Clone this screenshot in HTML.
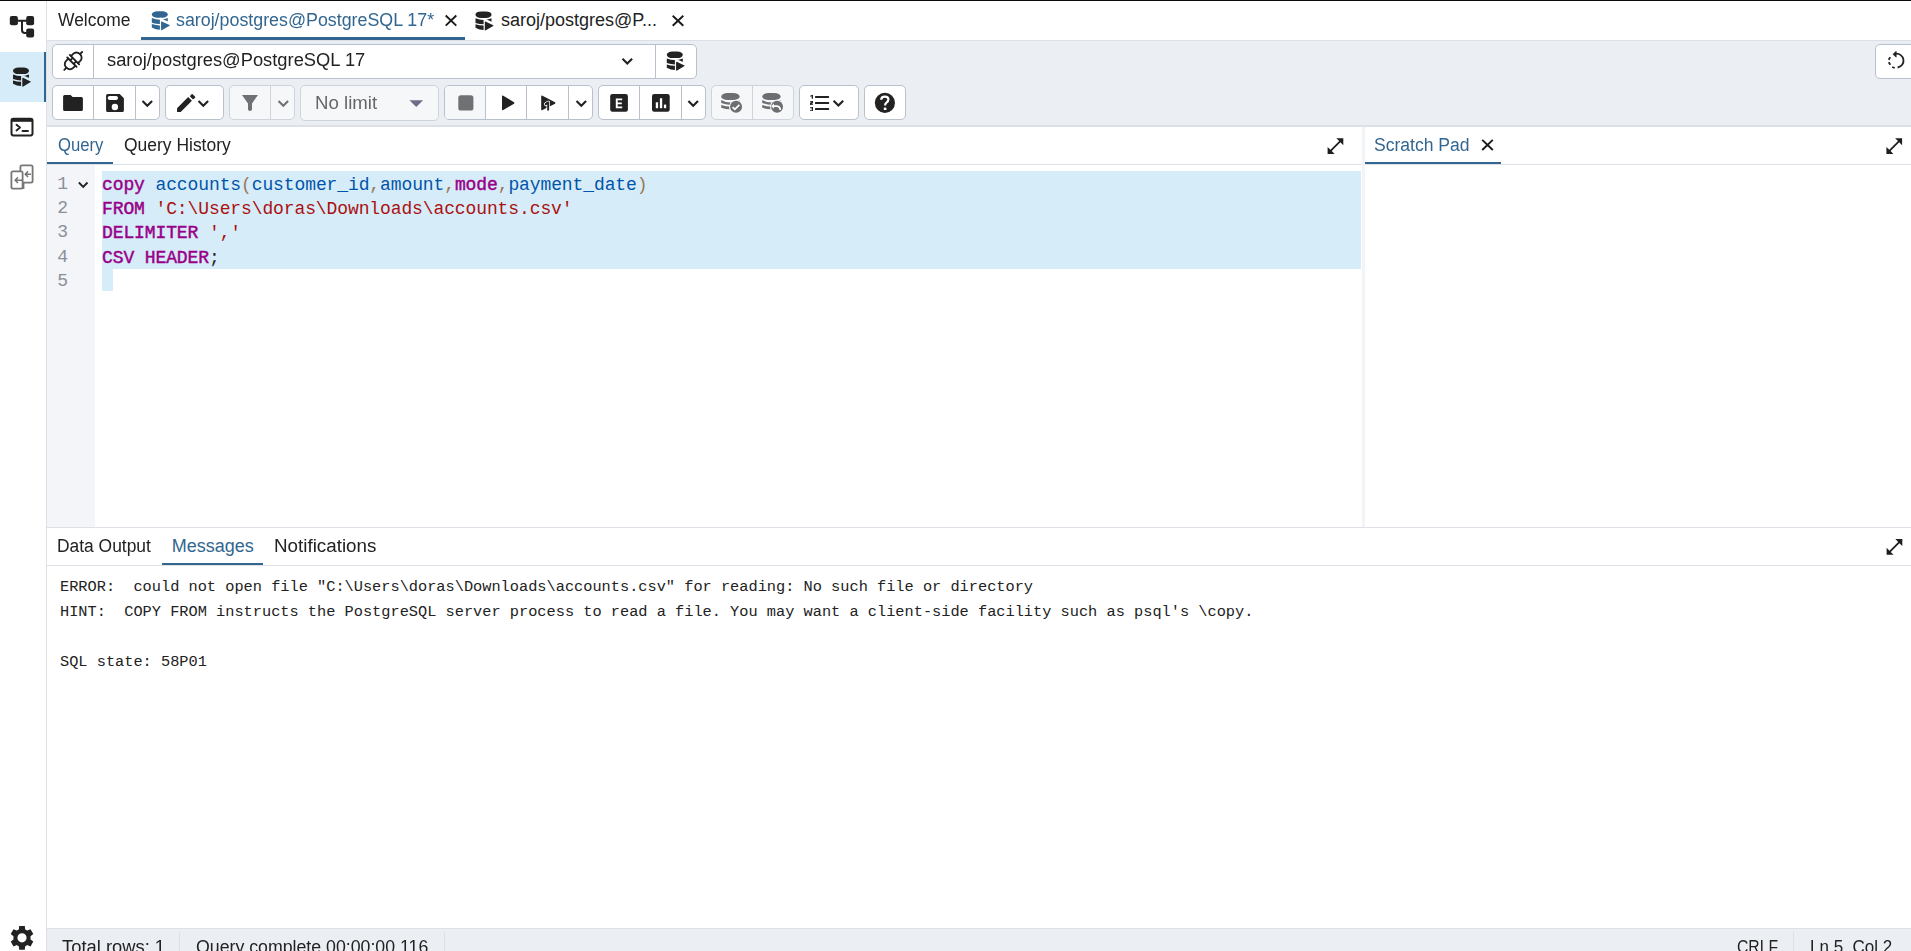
<!DOCTYPE html>
<html><head><meta charset="utf-8">
<style>
*{box-sizing:border-box;margin:0;padding:0}
html,body{width:1911px;height:951px;overflow:hidden;background:#fff}
body{position:relative;font-family:"Liberation Sans",sans-serif;color:#222;font-size:18px}
.a{position:absolute}
.t{position:absolute;white-space:pre;line-height:18px;font-size:18px;transform-origin:0 0}
.m{position:absolute;white-space:pre;font-family:"Liberation Mono",monospace;transform-origin:0 0}
.bd{background:#dde0e6}
.btn{position:absolute;background:#fff;border:1px solid #b9c1cd;border-radius:5px}
.dis{background:#f6f7f9;border-color:#cfd4dc}
.dv{position:absolute;top:0;bottom:0;width:1px;background:#b9c1cd}
.blue{color:#326690}
.kw{color:#990088;font-weight:normal;-webkit-text-stroke:0.45px #990088}
svg{position:absolute;left:0;top:0}
</style></head><body>
<!-- top window line -->
<div class="a" style="left:0;top:0;width:1911px;height:1px;background:#0a0a0a"></div>

<!-- sidebar -->
<div class="a bd" style="left:46px;top:1px;width:1px;height:950px"></div>
<div class="a" style="left:0;top:52px;width:44px;height:50px;background:#d7ecf9"></div>
<div class="a" style="left:44px;top:52px;width:2px;height:50px;background:#326690"></div>

<!-- tab bar -->
<div class="a bd" style="left:47px;top:40px;width:1864px;height:1px"></div>
<div class="t" style="left:57.5px;top:10.5px;transform:scaleX(0.969)">Welcome</div>
<div class="t blue" style="left:175.8px;top:10.5px;transform:scaleX(0.99)">saroj/postgres@PostgreSQL 17*</div>
<div class="a" style="left:141px;top:37px;width:324px;height:3px;background:#326690"></div>
<div class="t" style="left:501px;top:10.5px">saroj/postgres@P...</div>

<!-- toolbar -->
<div class="a" style="left:47px;top:41px;width:1864px;height:84px;background:#ebeef3"></div>
<div class="a bd" style="left:47px;top:125px;width:1864px;height:2px"></div>

<!-- row1 -->
<div class="btn" style="left:52px;top:44px;width:645px;height:35px">
  <div class="dv" style="left:40px"></div>
  <div class="dv" style="left:602px"></div>
</div>
<div class="t" style="left:107.1px;top:51px;transform:scaleX(1.018)">saroj/postgres@PostgreSQL 17</div>
<div class="btn" style="left:1875px;top:44px;width:60px;height:35px"></div>

<!-- row2 -->
<div class="btn" style="left:52px;top:85px;width:108px;height:35px">
  <div class="dv" style="left:40px"></div>
  <div class="dv" style="left:82px"></div>
</div>
<div class="btn" style="left:165px;top:85px;width:59px;height:35px"></div>
<div class="btn dis" style="left:229px;top:85px;width:66px;height:35px">
  <div class="dv" style="left:40px;background:#cfd4dc"></div>
</div>
<div class="btn dis" style="left:300px;top:85px;width:139px;height:36px"></div>
<div class="t" style="left:314.8px;top:93.5px;color:#666;transform:scaleX(1.035)">No limit</div>
<div class="btn" style="left:444px;top:85px;width:149px;height:35px;overflow:hidden">
  <div class="a" style="left:0;top:0;width:41px;height:35px;background:#f6f7f9"></div>
  <div class="dv" style="left:40px"></div>
  <div class="dv" style="left:81px"></div>
  <div class="dv" style="left:123px"></div>
</div>
<div class="btn" style="left:598px;top:85px;width:108px;height:35px">
  <div class="dv" style="left:40px"></div>
  <div class="dv" style="left:82px"></div>
</div>
<div class="btn dis" style="left:711px;top:85px;width:83px;height:35px">
  <div class="dv" style="left:40px;background:#cfd4dc"></div>
</div>
<div class="btn" style="left:799px;top:85px;width:60px;height:35px"></div>
<div class="btn" style="left:864px;top:85px;width:42px;height:35px"></div>

<!-- query tabs -->
<div class="a bd" style="left:47px;top:164px;width:1315px;height:1px"></div>
<div class="t blue" style="left:57.7px;top:135.5px;transform:scaleX(0.927)">Query</div>
<div class="t" style="left:123.7px;top:135.5px;transform:scaleX(0.97)">Query History</div>
<div class="a" style="left:47px;top:162px;width:66px;height:2px;background:#326690"></div>

<!-- splitter -->
<div class="a" style="left:1362px;top:127px;width:3px;height:400px;background:#f3f4f7"></div>

<!-- scratch pad -->
<div class="a bd" style="left:1365px;top:164px;width:546px;height:1px"></div>
<div class="t blue" style="left:1374.4px;top:135.5px;transform:scaleX(0.975)">Scratch Pad</div>
<div class="a" style="left:1365px;top:162px;width:136px;height:2px;background:#326690"></div>

<!-- editor -->
<div class="a" style="left:47px;top:165px;width:48px;height:362px;background:#f3f5f9"></div>
<div class="a" style="left:102px;top:171px;width:1259px;height:98px;background:#d7ecf9"></div>
<div class="a" style="left:102px;top:269px;width:11px;height:22px;background:#d7ecf9"></div>


<!-- code -->
<div class="m" style="left:102px;top:172.5px;font-size:18px;line-height:24.35px;letter-spacing:-0.11px;color:#222"><div><b class="kw">copy</b> <span style="color:#0055aa">accounts</span><span style="color:#997755">(</span><span style="color:#0055aa">customer_id</span><span style="color:#997755">,</span><span style="color:#0055aa">amount</span><span style="color:#997755">,</span><b class="kw">mode</b><span style="color:#997755">,</span><span style="color:#0055aa">payment_date</span><span style="color:#997755">)</span></div><div><b class="kw">FROM</b> <span style="color:#aa1111">'C:\Users\doras\Downloads\accounts.csv'</span></div><div><b class="kw">DELIMITER</b> <span style="color:#aa1111">','</span></div><div><b class="kw">CSV</b> <b class="kw">HEADER</b><span style="color:#222">;</span></div></div>
<div class="m" style="left:53px;top:171.5px;font-size:18px;line-height:24.35px;color:#8a8f98;width:15px;text-align:right">1
2
3
4
5</div>

<!-- messages -->
<div class="m" style="left:60px;top:575px;font-size:15.3px;line-height:25px;color:#222">ERROR:  could not open file "C:\Users\doras\Downloads\accounts.csv" for reading: No such file or directory
HINT:  COPY FROM instructs the PostgreSQL server process to read a file. You may want a client-side facility such as psql's \copy.

SQL state: 58P01</div>
<div class="a bd" style="left:47px;top:527px;width:1864px;height:1px"></div>

<!-- output tabs -->
<div class="t" style="left:57.2px;top:536.5px;transform:scaleX(0.967)">Data Output</div>
<div class="t blue" style="left:171.8px;top:536.5px">Messages</div>
<div class="t" style="left:273.6px;top:536.5px;transform:scaleX(1.044)">Notifications</div>
<div class="a" style="left:162px;top:563px;width:101px;height:2px;background:#326690"></div>
<div class="a bd" style="left:47px;top:565px;width:1864px;height:1px"></div>

<!-- status bar -->
<div class="a" style="left:47px;top:928px;width:1864px;height:23px;background:#ebeef3;border-top:1px solid #dde0e6"></div>
<div class="t" style="left:62px;top:937.5px;transform:scaleX(1.02)">Total rows: 1</div>
<div class="a bd" style="left:179px;top:932px;width:1px;height:19px"></div>
<div class="t" style="left:195.5px;top:937.5px;transform:scaleX(0.985)">Query complete 00:00:00.116</div>
<div class="a bd" style="left:444px;top:932px;width:1px;height:19px"></div>
<div class="t" style="left:1737px;top:938px;transform:scaleX(0.875)">CRLF</div>
<div class="a bd" style="left:1793px;top:932px;width:1px;height:19px"></div>
<div class="t" style="left:1809.5px;top:938px;transform:scaleX(0.945)">Ln 5, Col 2</div>

<!-- ICONS -->
<svg width="1911" height="951" viewBox="0 0 1911 951" style="position:absolute;left:0;top:0;pointer-events:none">
<defs>
  <mask id="dbm" maskUnits="userSpaceOnUse" x="-5" y="-5" width="30" height="30">
    <rect x="-5" y="-5" width="30" height="30" fill="#fff"/>
    <polygon points="8.1,6.8 9.4,6.8 9.4,7.5 18.5,11.6 18.5,25 8.1,25" fill="#000"/>
  </mask>
  <g id="db">
    <g mask="url(#dbm)">
      <rect x="0" y="0.2" width="16" height="6.5" rx="5.5" ry="3.25"/>
      <path d="M0,7.1 Q8,10.3 16,7.1 L16,11.7 Q8,14.5 0,11.7 Z"/>
      <path d="M0,13.0 Q8,15.8 16,13.0 L16,16.45 Q8,20.9 0,16.45 Z"/>
    </g>
    <path d="M9.3,10.8 Q9.3,10.1 9.9,10.4 L17.7,14.1 Q18.3,14.4 17.7,14.7 L9.9,19.3 Q9.3,19.6 9.3,18.9 Z"/>
  </g>
  <g id="chev"><path d="M1.2,1.2 L6,6 L10.8,1.2" fill="none" stroke-width="2.1" stroke-linecap="butt" stroke-linejoin="miter"/></g>
  <g id="xic"><path d="M0.7,0.7 L11.3,10.8 M11.3,0.7 L0.7,10.8" fill="none" stroke-width="1.9"/></g>
  <path id="expand" d="M21 11V3h-8l3.29 3.29-10 10L3 13v8h8l-3.29-3.29 10-10z"/>
  <mask id="gdb" maskUnits="userSpaceOnUse" x="-5" y="-5" width="35" height="30">
    <rect x="-5" y="-5" width="35" height="30" fill="#fff"/>
    <circle cx="14.85" cy="13.9" r="7.0" fill="#000"/>
  </mask>
  <g id="graydb">
    <g mask="url(#gdb)">
      <rect x="0.05" y="0" width="18.4" height="7.2" rx="6.5" ry="3.6"/>
      <path d="M0,7.2 Q9.2,12.2 18.4,7.2 L18.4,10.2 Q9.2,13.8 0,10.2 Z"/>
      <path d="M0,12.0 Q9.2,15.0 18.4,12.0 L18.4,14.9 Q9.2,17.9 0,14.9 Z"/>
    </g>
    <circle cx="14.85" cy="13.9" r="6.0"/>
  </g>
</defs>

<!-- sidebar icons -->
<g fill="#222">
  <rect x="9.8" y="15.9" width="8.1" height="9.4" rx="2"/>
  <rect x="26.2" y="15.9" width="7.9" height="9.4" rx="2"/>
  <rect x="26.2" y="28.6" width="7.9" height="9" rx="2"/>
  <path d="M17,20.8 H27 M22,20.8 V30 Q22,33 25,33 H27" fill="none" stroke="#222" stroke-width="2"/>
</g>
<use href="#db" x="13" y="67.4" fill="#222"/>
<g fill="none" stroke="#222">
  <rect x="11.5" y="118.8" width="21" height="16.6" rx="1.8" stroke-width="2"/>
  <rect x="11.5" y="118.8" width="21" height="3" fill="#222" stroke="none"/>
  <path d="M16.5,124.8 L20,127.6 L16.5,130.4" stroke-width="1.9" stroke-linecap="round" stroke-linejoin="round"/>
  <path d="M22.5,131 H28" stroke-width="1.9" stroke-linecap="round"/>
</g>
<g fill="none" stroke="#777" stroke-width="1.8">
  <rect x="20.4" y="165.4" width="12.2" height="17.2" rx="1.6"/>
  <path d="M23.5,183 V189 Q23.5,189 23.5,189" />
  <rect x="11.4" y="171.4" width="11.2" height="17.2" rx="1.6" fill="#fff"/>
  <path d="M31,174.2 H25.4 M28,171.4 L25.3,174.2 L28,177" stroke-width="1.6"/>
  <path d="M22.4,180.2 H15.2 M17.9,177.4 L15.2,180.2 L17.9,183" stroke-width="1.6"/>
</g>
<g fill="#222">
  <path d="M22,925.9 l0,0"/>
</g>
<g transform="translate(22,937.8)" fill="#222">
  <path id="gear" d="M-2.8,-11.9 H2.8 L3.2,-8.4 Q4.3,-7.9 5.2,-7.2 L8.5,-8.6 L11.3,-3.7 L8.5,-1.6 Q8.6,0 8.5,1.6 L11.3,3.7 L8.5,8.6 L5.2,7.2 Q4.3,7.9 3.2,8.4 L2.8,11.9 H-2.8 L-3.2,8.4 Q-4.3,7.9 -5.2,7.2 L-8.5,8.6 L-11.3,3.7 L-8.5,1.6 Q-8.6,0 -8.5,-1.6 L-11.3,-3.7 L-8.5,-8.6 L-5.2,-7.2 Q-4.3,-7.9 -3.2,-8.4 Z M0,-4.6 A4.6,4.6 0 1 0 0,4.6 A4.6,4.6 0 1 0 0,-4.6 Z" fill-rule="evenodd"/>
</g>

<!-- tab icons -->
<use href="#db" x="151.8" y="11" fill="#326690"/>
<use href="#xic" x="445" y="14.8" stroke="#1a1a1a"/>
<use href="#db" x="475.5" y="11.2" fill="#222"/>
<use href="#xic" x="672" y="15" stroke="#1a1a1a"/>

<!-- row1 icons -->
<g fill="none" stroke="#1e1e1e" stroke-width="1.8" stroke-linecap="round" transform="translate(73.2,60.9) rotate(-45)">
  <path d="M-1.8,-6.6 V6.6 M1.8,-6.6 V6.6"/>
  <path d="M-1.8,-5 H-5 A4.6,4.6 0 0 0 -9.6,-0.4 V0.4 A4.6,4.6 0 0 0 -5,5 H-1.8"/>
  <path d="M1.8,-5 H5 A4.6,4.6 0 0 1 9.6,-0.4 V0.4 A4.6,4.6 0 0 1 5,5 H1.8"/>
  <path d="M-1.8,-2.4 H1.8 M-1.8,2.4 H1.8" stroke-linecap="butt"/>
  <path d="M-9.6,0 H-12.6 M9.6,0 H12.6"/>
</g>
<use href="#chev" x="621.3" y="57.5" stroke="#222"/>
<use href="#db" x="666.8" y="51.4" fill="#222"/>
<g fill="none" stroke="#222" stroke-width="1.8">
  <path d="M1888.6,59.8 L1890.3,57.3 M1888.7,62.2 L1890.3,64.8 M1892.2,67.0 L1894.7,68.0" />
  <path d="M1895.6,53.8 A6.9,6.9 0 1 1 1897.6,67.5" />
</g>
<path d="M1892.9,54.3 L1896.2,51.2 L1896.2,57.2 Z" fill="#222" stroke="#222" stroke-width="0.6" stroke-linejoin="round"/>

<!-- row2 icons -->
<g fill="#222">
  <path d="M63.1,96.6 Q63.1,95.1 64.6,95.1 H70.6 L72.6,97 H81.4 Q82.9,97 82.9,98.5 V109.4 Q82.9,110.9 81.4,110.9 H64.6 Q63.1,110.9 63.1,109.4 Z"/>
  <path d="M106.1,95.6 Q106.1,94 107.7,94 H119.7 L123.9,98.3 V110.4 Q123.9,112 122.3,112 H107.7 Q106.1,112 106.1,110.4 Z M109.7,95.9 H116 Q118,95.9 118,98 Q118,100 116,100 H109.7 Q107.7,100 107.7,98 Q107.7,95.9 109.7,95.9 Z M114.9,103.8 A3.2,3.2 0 1 0 114.9,110.2 A3.2,3.2 0 1 0 114.9,103.8 Z" fill-rule="evenodd"/>
</g>
<use href="#chev" x="141.3" y="99.8" stroke="#222"/>
<g fill="#222">
  <path d="M177,108.3 L188.2,97.1 L191.9,100.8 L180.7,112 L177,112 Z"/>
  <path d="M189.8,96.3 L191.6,94.2 Q192.1,93.8 192.6,94.2 L195.1,96.8 Q195.5,97.3 195.1,97.7 L193,99.5 Z"/>
</g>
<use href="#chev" x="197.3" y="99.8" stroke="#222"/>
<path d="M242,95 H258 L252,103.4 V109.3 Q252,111 250,111 Q248,111 248,109.3 V103.4 Z" fill="#707174"/>
<use href="#chev" x="277.3" y="99.8" stroke="#707174"/>
<path d="M409.4,100.2 H423.1 L416.25,106.9 Z" fill="#6b6e86"/>
<rect x="458.3" y="95.2" width="15.1" height="15.4" rx="2.6" fill="#707174"/>
<path d="M502,96.5 Q502,95 503.3,95.8 L514,102.2 Q515,103 514,103.7 L503.3,110 Q502,110.8 502,109.3 Z" fill="#222"/>
<path d="M541.2,96.5 Q541.2,95 542.5,95.8 L555,102.2 Q556,103 555,103.7 L542.5,110 Q541.2,110.8 541.2,109.3 Z" fill="#222"/>
<path d="M544.7,103.6 L547.6,101.6 H549.1 V110.6 H547.2 V104.5 L545.3,105.5 Z" fill="#222" stroke="#fff" stroke-width="1.5" stroke-linejoin="round" paint-order="stroke"/>
<use href="#chev" x="575.3" y="99.8" stroke="#222"/>
<rect x="610.2" y="94" width="17.7" height="17.7" rx="2.2" fill="#222"/>
<path d="M615.8,98.6 H622.2 V100.3 H617.7 V102.5 H621.8 V104.2 H617.7 V106.5 H622.2 V108.2 H615.8 Z" fill="#fff"/>
<rect x="652" y="94" width="17.7" height="17.7" rx="2.2" fill="#222"/>
<g fill="#fff"><rect x="655.8" y="102.3" width="2.3" height="5.9"/><rect x="659.9" y="98.2" width="2.3" height="10"/><rect x="663.9" y="104.6" width="2.3" height="3.6"/></g>
<use href="#chev" x="687.2" y="99.8" stroke="#222"/>
<use href="#graydb" x="721.2" y="92.9" fill="#6d6e71"/>
<path d="M732.6,107.2 L734.8,109.4 L739.4,104.8" fill="none" stroke="#fff" stroke-width="1.7"/>
<use href="#graydb" x="762.2" y="92.9" fill="#6d6e71"/>
<path d="M774,103.6 L771.2,106.2 L774,108.8 Z" fill="#fff"/>
<path d="M772.8,106.2 H776.5 Q780,106.2 780.3,110" fill="none" stroke="#fff" stroke-width="1.7"/>
<g fill="#222">
  <rect x="815" y="95.9" width="14.1" height="2" rx="0.6"/>
  <rect x="815" y="102" width="14.1" height="2" rx="0.6"/>
  <rect x="815" y="108" width="14.1" height="2" rx="0.6"/>
  <path d="M810.2,95.7 L811.7,94.9 H813 V98.8 H811.7 V96.3 L810.2,96.8 Z"/>
  <path d="M810,101 H813 V103.3 L811,104.2 H813 V105 H810 V102.7 L812,101.8 H810 Z"/>
  <path d="M810,107 H813 V111 H810 V110.2 H812 V109.3 H810.6 V108.6 H812 V107.8 H810 Z"/>
</g>
<use href="#chev" x="832.4" y="99.6" stroke="#222"/>
<circle cx="884.9" cy="102.85" r="10.1" fill="#222"/>
<path d="M881.2,99.8 Q881.2,96.6 884.9,96.6 Q888.4,96.6 888.4,99.6 Q888.4,101.4 886.5,102.6 Q885.1,103.5 885.1,105.6" fill="none" stroke="#fff" stroke-width="2.2"/>
<rect x="883.8" y="107.6" width="2.6" height="2.4" fill="#fff"/>

<!-- editor -->
<use href="#chev" x="77.8" y="181.4" stroke="#222" transform="translate(77.8,181.4) scale(0.9) translate(-77.8,-181.4)"/>
<g fill="#1e1e1e">
  <use href="#expand" transform="translate(1325,135.6) scale(0.872)"/>
  <use href="#expand" transform="translate(1883.8,135.6) scale(0.872)"/>
  <use href="#expand" transform="translate(1884,536.5) scale(0.872)"/>
</g>
<use href="#xic" x="1481.5" y="139.2" stroke="#1a1a1a"/>
</svg>
<!-- /ICONS -->
</body></html>
